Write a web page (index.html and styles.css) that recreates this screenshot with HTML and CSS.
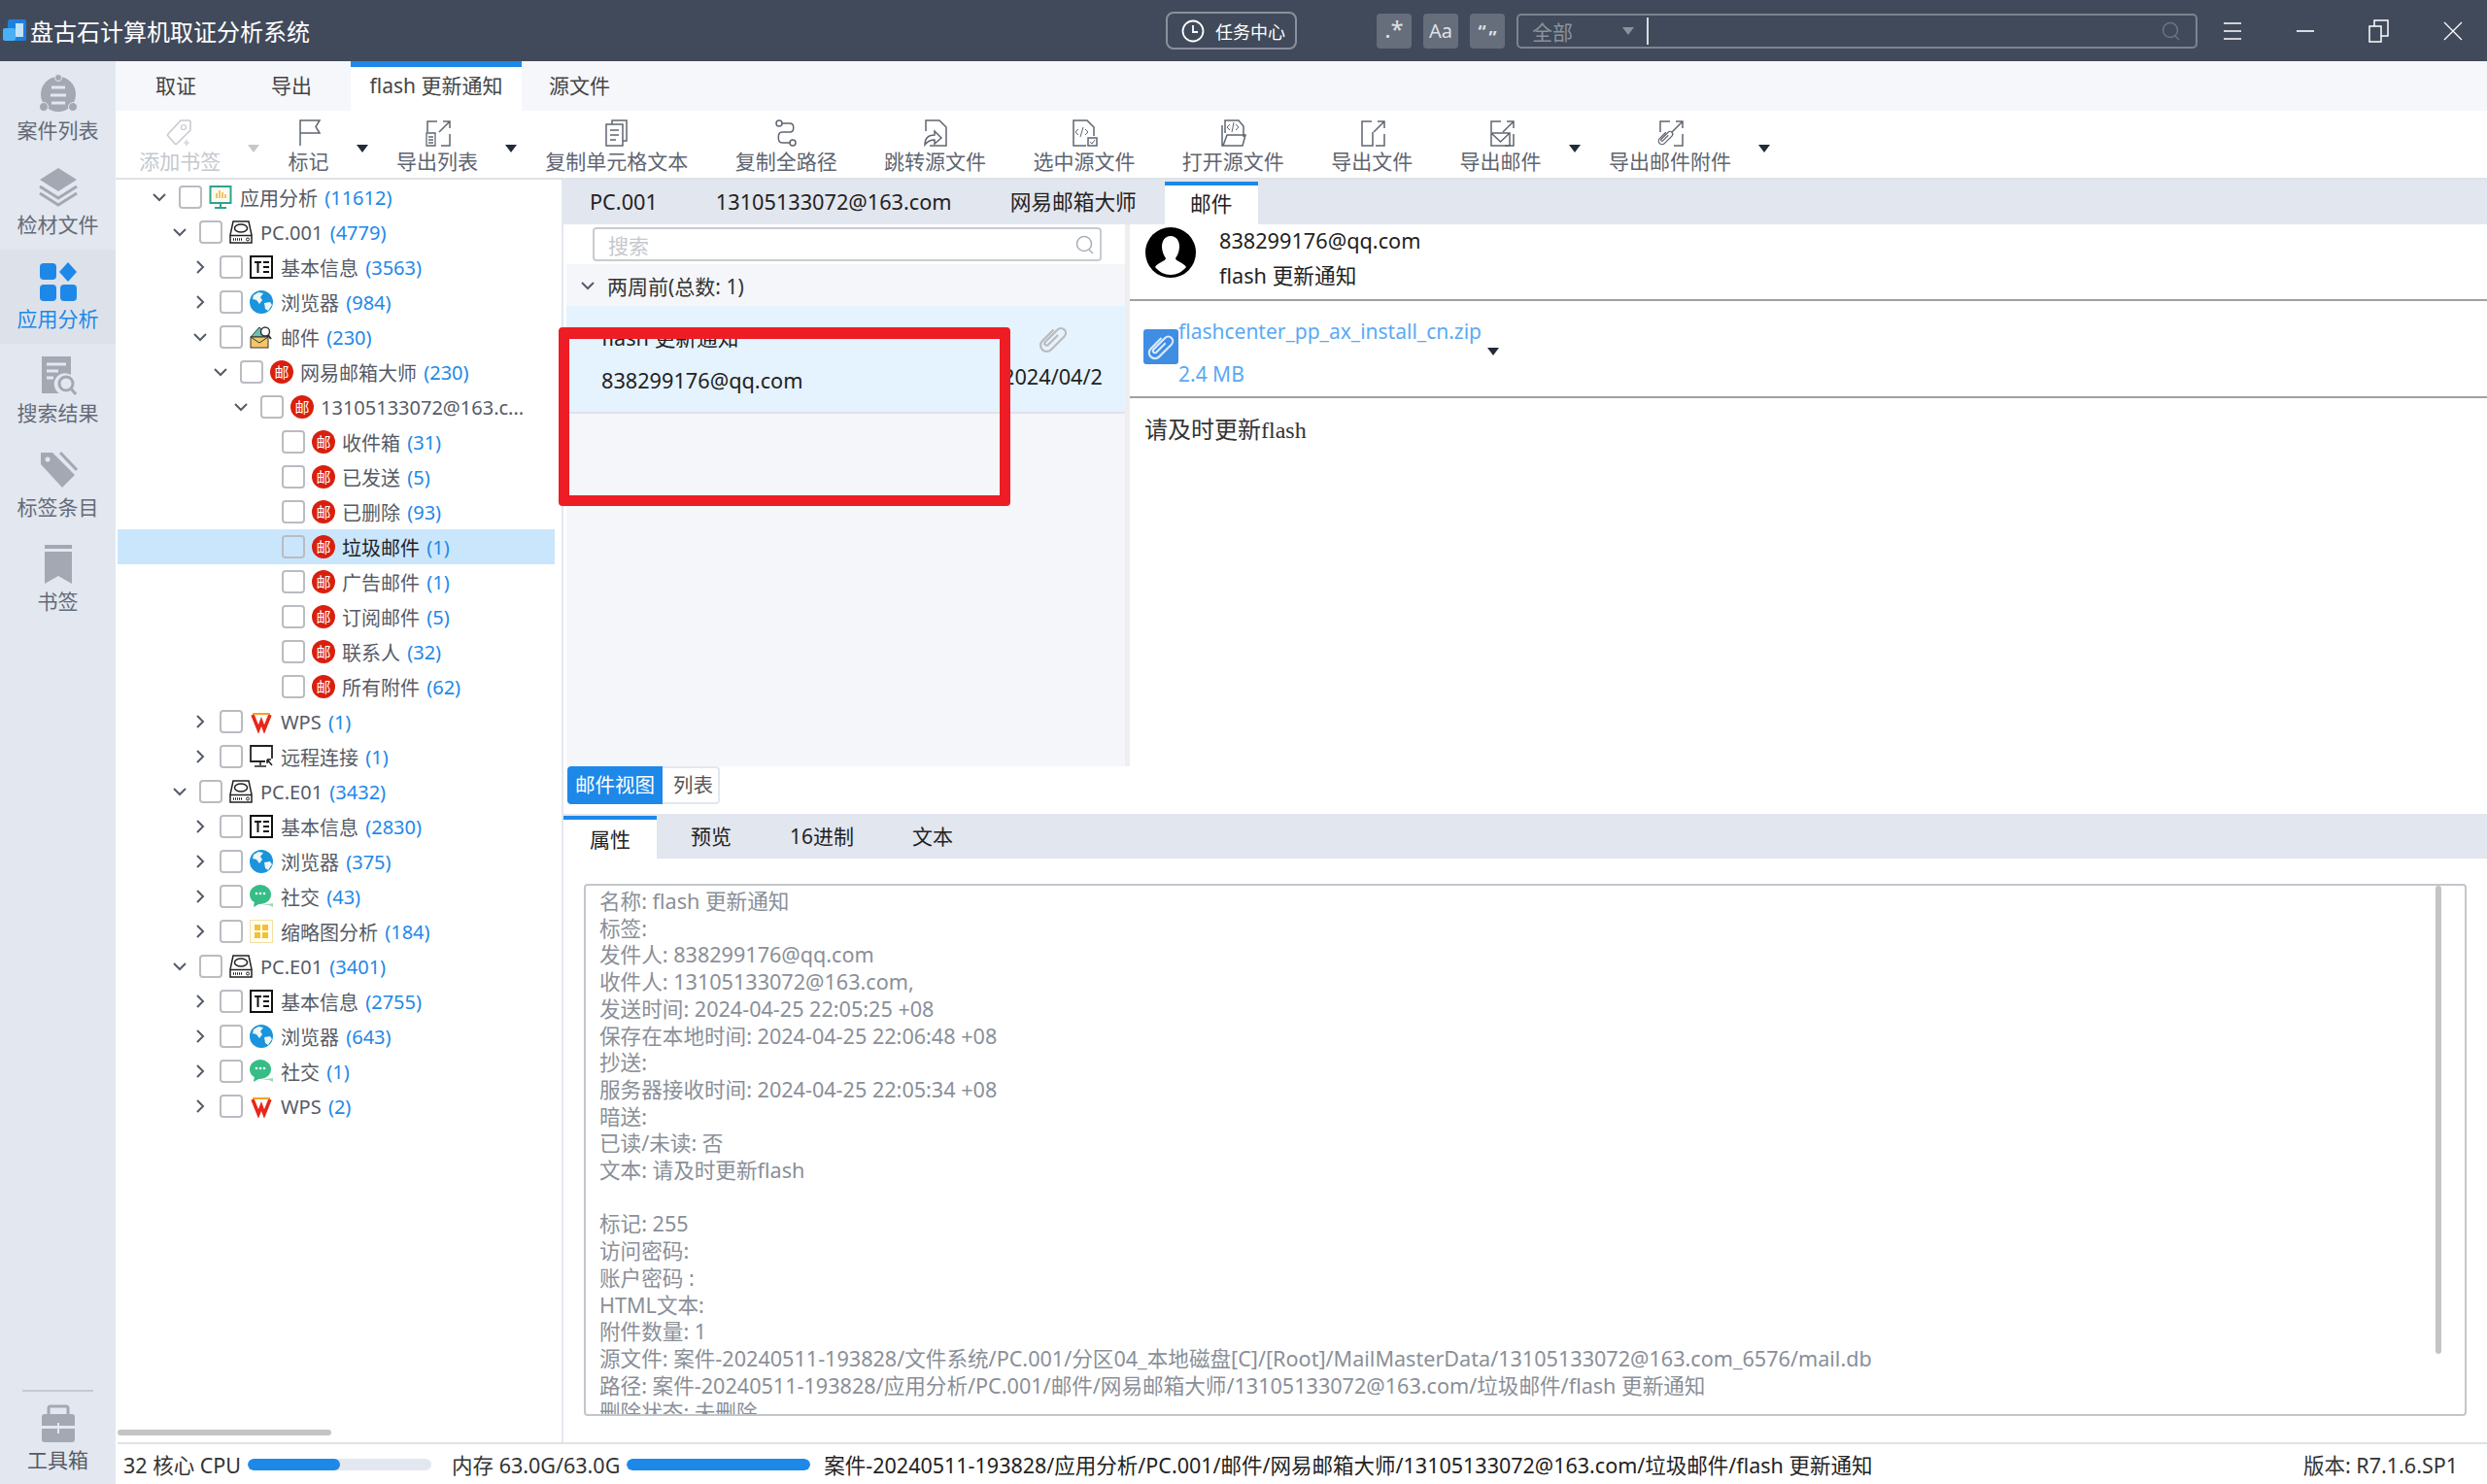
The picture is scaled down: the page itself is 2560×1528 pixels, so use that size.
FILE: index.html
```html
<!DOCTYPE html>
<html lang="zh-CN">
<head>
  <meta charset="UTF-8" />
  <title>盘古石计算机取证分析系统</title>
  <link rel="stylesheet" href="styles.css">
</head>
<body>
  <svg class="sprite" width="0" height="0">
    <symbol id="i-chev-d" viewBox="0 0 16 16"><path d="M2 5l6 6 6-6" fill="none" stroke="#555c68" stroke-width="2"/></symbol>
    <symbol id="i-chev-r" viewBox="0 0 16 16"><path d="M5 2l6 6-6 6" fill="none" stroke="#555c68" stroke-width="2"/></symbol>
    <symbol id="i-app" viewBox="0 0 24 24"><rect x="1.500" y="1" width="21" height="17" fill="#fdfaf0" stroke="#2aa58e" stroke-width="2"/><path d="M8 13V8M11 13V5M14 13V7M17 13V9" stroke="#e9b23c" stroke-width="1.5"/><path d="M12 18v4M6 23h12" stroke="#2aa58e" stroke-width="2"/></symbol>
    <symbol id="i-disk" viewBox="0 0 24 24"><path d="M4 1h16l3 14v8H1v-8z" fill="#fff" stroke="#222" stroke-width="1.5"/><ellipse cx="12" cy="8" rx="6.500" ry="4" fill="#fff" stroke="#222" stroke-width="1.5"/><path d="M1 15.500h22" stroke="#222" stroke-width="1.5"/><path d="M4 19.500h10" stroke="#222" stroke-width="2.500" stroke-dasharray="1 1"/><circle cx="19" cy="19.500" r="1.500" fill="none" stroke="#222"/></symbol>
    <symbol id="i-info" viewBox="0 0 24 24"><rect x="1" y="1" width="22" height="22" fill="#fff" stroke="#111" stroke-width="2"/><path d="M5 7h7M8.500 7v11M14 7h6M14 12h6M14 17h6" stroke="#111" stroke-width="2"/></symbol>
    <symbol id="i-globe" viewBox="0 0 24 24"><circle cx="12" cy="12" r="12" fill="#1a94dc"/><path d="M4 5l5-3 5 1-3 4 2 3-3 4-3-4-4-1zM15 13l6-1 2 3-4 6-3-2z" fill="#eef6f2"/></symbol>
    <symbol id="i-mailbox" viewBox="0 0 24 24"><path d="M1 12L10 2l9 10z" fill="#6cc0b4" stroke="#333"/><rect x="1" y="12" width="18" height="11" fill="#f4c766" stroke="#333"/><path d="M1 12l9 6 9-6" fill="none" stroke="#333"/><circle cx="16" cy="6.500" r="4.500" fill="#fff" stroke="#333" stroke-width="1.500"/><path d="M19 10l3 4" stroke="#333" stroke-width="2"/></symbol>
    <symbol id="i-wps" viewBox="0 0 24 24"><path d="M3 5l6 15 3-8 3 8 6-15" fill="none" stroke="#e8261a" stroke-width="3.500"/><path d="M3 4h18" stroke="#f9a01b" stroke-width="2"/></symbol>
    <symbol id="i-remote" viewBox="0 0 24 24"><path d="M16 17H1V1h22v13" fill="none" stroke="#222" stroke-width="1.800"/><path d="M11 17v4M5 22h12M18 15l5 6M18 15v4M18 15h4" fill="none" stroke="#222" stroke-width="1.500"/></symbol>
    <symbol id="i-chat" viewBox="0 0 24 24"><path d="M24 19c0 2 0 4 0 4l-4-2h-8z" fill="#9bd8b8"/><ellipse cx="11" cy="10" rx="11" ry="10" fill="#35bd85"/><path d="M5 17l-1 6 7-4z" fill="#35bd85"/><circle cx="7" cy="9" r="1.300" fill="#fff"/><circle cx="11" cy="9" r="1.300" fill="#fff"/><circle cx="15" cy="9" r="1.300" fill="#fff"/></symbol>
    <symbol id="i-thumb" viewBox="0 0 24 24"><rect x=".5" y=".5" width="23" height="23" fill="#fffdf4" stroke="#f5dfa0"/><path d="M5 5h6v6H5zM13 5h6v6h-6zM5 13h6v6H5zM13 13h6v6h-6z" fill="#f2c230"/></symbol>
    <symbol id="i-clip" viewBox="0 0 24 24"><path transform="rotate(45 12 12)" d="M12.500 7.500v10a1.500 1.500 0 0 1-3 0V5a3.500 3.500 0 0 1 7 0v13.500a4.500 4.500 0 0 1-9 0V7" fill="none" stroke="currentColor" stroke-width="1.600"/></symbol>
    <symbol id="i-export" viewBox="0 0 28 28"><path d="M4 13V2h10M18 27h9V15M27 2L16 13M20 2h7v7" fill="none" stroke="currentColor" stroke-width="1.500"/></symbol>
  </svg>

  <header class="titlebar">
    <svg class="app-logo" width="24" height="24" viewBox="0 0 24 24"><rect x="5" y="0" width="19" height="22" rx="2" fill="#1e7fdc"/><rect x="0" y="9" width="13" height="13" rx="2" fill="#49b0f5"/><rect x="13" y="4" width="8" height="14" fill="#bfe2fb"/></svg>
    <div class="app-title">盘古石计算机取证分析系统</div>
    <button class="task-btn">
      <svg width="24" height="24" viewBox="0 0 24 24"><circle cx="12" cy="12" r="10.500" fill="none" stroke="#fff" stroke-width="1.800"/><path d="M12 6v7h5" fill="none" stroke="#fff" stroke-width="1.800"/></svg>
      任务中心
    </button>
    <div class="opt-btn opt-regex">.*</div>
    <div class="opt-btn">Aa</div>
    <div class="opt-btn opt-quote">“<span>”</span></div>
    <div class="searchbar">
      <span class="scope">全部</span>
      <span class="scope-caret"></span>
      <span class="scope-sep"></span>
      <svg class="searchbar-ic" width="22" height="22" viewBox="0 0 22 22"><circle cx="10" cy="10" r="7.500" fill="none" stroke="#6d7481" stroke-width="1.500"/><path d="M15 16l4 4" stroke="#6d7481" stroke-width="1.500"/></svg>
    </div>
    <div class="win-btns">
      <svg width="20" height="20" viewBox="0 0 20 20"><path d="M1 2h18M1 10h18M1 18h18" stroke="#fff" stroke-width="1.500"/></svg>
      <svg width="20" height="20" viewBox="0 0 20 20"><path d="M1 10h18" stroke="#d8dbe0" stroke-width="2"/></svg>
      <svg width="22" height="24" viewBox="0 0 22 24"><rect x="1" y="7" width="12" height="16" fill="#414a5b" stroke="#fff" stroke-width="1.500"/><path d="M6 7V1h14v16h-7" fill="none" stroke="#fff" stroke-width="1.500"/></svg>
      <svg width="20" height="20" viewBox="0 0 20 20"><path d="M1 1l18 18M19 1L1 19" stroke="#fff" stroke-width="1.200"/></svg>
    </div>
  </header>

  <div class="app">
    <nav class="sidebar">
      <div class="side-item">
        <svg width="40" height="40" viewBox="0 0 40 40"><circle cx="20" cy="21" r="18" fill="#a3a8b3"/><circle cx="20" cy="4" r="3.500" fill="#a3a8b3" stroke="#e3e7ef"/><circle cx="5" cy="34" r="4.500" fill="#a3a8b3" stroke="#e3e7ef"/><circle cx="35" cy="34" r="4.500" fill="#a3a8b3" stroke="#e3e7ef"/><path d="M13 14h14M12 22h16M13 30h14" stroke="#e3e7ef" stroke-width="3"/></svg>
        <span>案件列表</span>
      </div>
      <div class="side-item">
        <svg width="40" height="40" viewBox="0 0 40 40"><path d="M20 0l19 12-19 12L1 12z" fill="#a3a8b3"/><path d="M1 19l19 12 19-12M1 26l19 12 19-12" fill="none" stroke="#a3a8b3" stroke-width="3"/></svg>
        <span>检材文件</span>
      </div>
      <div class="side-item active">
        <svg width="40" height="40" viewBox="0 0 40 40"><rect x="1" y="1" width="17" height="17" rx="4" fill="#1e88e8"/><path d="M30 0l9 10-9 10-9-10z" fill="#1e88e8"/><rect x="1" y="23" width="17" height="17" rx="4" fill="#1e88e8"/><rect x="22" y="23" width="17" height="17" rx="4" fill="#1e88e8"/></svg>
        <span>应用分析</span>
      </div>
      <div class="side-item">
        <svg width="40" height="40" viewBox="0 0 40 40"><path d="M3 0h30v19a11 11 0 0 0-12 19H3z" fill="#a3a8b3"/><path d="M8 8h20M8 15h12M8 22h7" stroke="#e3e7ef" stroke-width="3"/><circle cx="28" cy="28" r="7" fill="none" stroke="#a3a8b3" stroke-width="3"/><path d="M33 33l5 6" stroke="#a3a8b3" stroke-width="3"/></svg>
        <span>搜索结果</span>
      </div>
      <div class="side-item">
        <svg width="40" height="40" viewBox="0 0 40 40"><path d="M2 2h12l23 23-13 13L2 14z" fill="#a3a8b3"/><path d="M22 2l17 18" stroke="#a3a8b3" stroke-width="3"/><circle cx="9" cy="9" r="2.500" fill="#e3e7ef"/></svg>
        <span>标签条目</span>
      </div>
      <div class="side-item">
        <svg width="40" height="40" viewBox="0 0 40 40"><path d="M6 0h28v4H6zM6 7h28v33l-14-8-14 8z" fill="#a3a8b3"/></svg>
        <span>书签</span>
      </div>
      <div class="side-tools">
        <svg width="40" height="40" viewBox="0 0 40 40"><path d="M10 10V4q0-2 2-2h16q2 0 2 2v6" fill="none" stroke="#a3a8b3" stroke-width="3"/><path d="M3 13q0-3 3-3h28q3 0 3 3v9H3zM3 25h34v11q0 3-3 3H6q-3 0-3-3z" fill="#a3a8b3"/><path d="M20 19v11" stroke="#e3e7ef" stroke-width="2"/></svg>
        <span>工具箱</span>
      </div>
    </nav>

    <div class="main">
      <div class="ribbon-tabs">
        <div class="rtab">取证</div>
        <div class="rtab">导出</div>
        <div class="rtab active">flash 更新通知</div>
        <div class="rtab">源文件</div>
      </div>

      <div class="toolbar">
        <div class="tool disabled">
          <svg width="28" height="28" viewBox="0 0 28 28"><path d="M15 1h9q1 0 1 1v9L11 25q-1 1-2 0L2 17q-1-1 0-2z" fill="none" stroke="currentColor" stroke-width="1.500"/><circle cx="18" cy="8" r="2.500" fill="none" stroke="currentColor" stroke-width="1.200"/><path d="M21 21v6M18 24h6" stroke="currentColor" stroke-width="1.200"/></svg>
          <span>添加书签</span>
        </div>
        <div class="caret disabled"></div>
        <div class="tool">
          <svg width="28" height="28" viewBox="0 0 28 28"><path d="M5 27V1h20l-4 6.500 4 6.500H5" fill="none" stroke="currentColor" stroke-width="1.500"/></svg>
          <span>标记</span>
        </div>
        <div class="caret"></div>
        <div class="tool">
          <svg width="28" height="28" viewBox="0 0 28 28"><use href="#i-export"/><path d="M3 14h9v13H3zM5 18h5M5 21h5M5 24h5" fill="none" stroke="currentColor" stroke-width="1.300"/></svg>
          <span>导出列表</span>
        </div>
        <div class="caret"></div>
        <div class="tool">
          <svg width="28" height="28" viewBox="0 0 28 28"><path d="M9 5V1h15v21h-4" fill="none" stroke="currentColor" stroke-width="1.500"/><path d="M3 5h17v22H3zM7 11h9M7 16h9M7 21h6" fill="none" stroke="currentColor" stroke-width="1.500"/></svg>
          <span>复制单元格文本</span>
        </div>
        <div class="tool">
          <svg width="28" height="28" viewBox="0 0 28 28"><circle cx="7" cy="4" r="3" fill="none" stroke="currentColor" stroke-width="1.500"/><circle cx="21" cy="24" r="3" fill="none" stroke="currentColor" stroke-width="1.500"/><path d="M10 4h8c5 0 5 9 0 9h-8c-5 0-5 11 0 11h8" fill="none" stroke="currentColor" stroke-width="1.500"/></svg>
          <span>复制全路径</span>
        </div>
        <div class="tool">
          <svg width="28" height="28" viewBox="0 0 28 28"><path d="M4 12V1h14l7 7v19H8" fill="none" stroke="currentColor" stroke-width="1.500"/><path d="M3 26c0-7 4-10 10-10v-4l7 7-7 6v-4c-4 0-7 1-10 5z" fill="none" stroke="currentColor" stroke-width="1.500"/></svg>
          <span>跳转源文件</span>
        </div>
        <div class="tool">
          <svg width="28" height="28" viewBox="0 0 28 28"><path d="M16 27H3V1h14l7 7v9" fill="none" stroke="currentColor" stroke-width="1.500"/><path d="M8 10l-3 3 3 3M15 10l3 3-3 3M13 8l-3 10" fill="none" stroke="currentColor"/><rect x="18" y="19" width="9" height="8" fill="none" stroke="currentColor" stroke-width="1.500"/><path d="M20 23l2 2 3-4" fill="none" stroke="currentColor"/></svg>
          <span>选中源文件</span>
        </div>
        <div class="tool">
          <svg width="28" height="28" viewBox="0 0 28 28"><path d="M6 14V1h14l5 6v11" fill="none" stroke="currentColor" stroke-width="1.500"/><path d="M3 6v21h21l3-11H8l-4 11" fill="none" stroke="currentColor" stroke-width="1.500"/><path d="M11 5l-3 3 3 3M17 5l3 3-3 3M15 3l-2 10" fill="none" stroke="currentColor"/></svg>
          <span>打开源文件</span>
        </div>
        <div class="tool">
          <svg width="28" height="28" viewBox="0 0 28 28"><use href="#i-export"/><path d="M4 13v14h11V13" fill="none" stroke="currentColor" stroke-width="1.500"/></svg>
          <span>导出文件</span>
        </div>
        <div class="tool">
          <svg width="28" height="28" viewBox="0 0 28 28"><use href="#i-export"/><path d="M4 14h19v13H4zM4 14l9.500 9 9.500-9" fill="none" stroke="currentColor" stroke-width="1.500"/></svg>
          <span>导出邮件</span>
        </div>
        <div class="caret"></div>
        <div class="tool">
          <svg width="28" height="28" viewBox="0 0 28 28"><use href="#i-export"/><use href="#i-clip" x="0" y="9" width="19" height="19"/></svg>
          <span>导出邮件附件</span>
        </div>
        <div class="caret"></div>
      </div>

      <div class="work">
        <div class="tree">
          <div class="row l0"><svg class="chev"><use href="#i-chev-d"/></svg><i class="cb"></i><svg class="ti"><use href="#i-app"/></svg>应用分析 <b>(11612)</b></div>
          <div class="row l1"><svg class="chev"><use href="#i-chev-d"/></svg><i class="cb"></i><svg class="ti"><use href="#i-disk"/></svg>PC.001 <b>(4779)</b></div>
          <div class="row l2"><svg class="chev"><use href="#i-chev-r"/></svg><i class="cb"></i><svg class="ti"><use href="#i-info"/></svg>基本信息 <b>(3563)</b></div>
          <div class="row l2"><svg class="chev"><use href="#i-chev-r"/></svg><i class="cb"></i><svg class="ti"><use href="#i-globe"/></svg>浏览器 <b>(984)</b></div>
          <div class="row l2"><svg class="chev"><use href="#i-chev-d"/></svg><i class="cb"></i><svg class="ti"><use href="#i-mailbox"/></svg>邮件 <b>(230)</b></div>
          <div class="row l3"><svg class="chev"><use href="#i-chev-d"/></svg><i class="cb"></i><span class="mm">邮</span>网易邮箱大师 <b>(230)</b></div>
          <div class="row l4"><svg class="chev"><use href="#i-chev-d"/></svg><i class="cb"></i><span class="mm">邮</span>13105133072@163.c...</div>
          <div class="row l5"><i class="cb"></i><span class="mm">邮</span>收件箱 <b>(31)</b></div>
          <div class="row l5"><i class="cb"></i><span class="mm">邮</span>已发送 <b>(5)</b></div>
          <div class="row l5"><i class="cb"></i><span class="mm">邮</span>已删除 <b>(93)</b></div>
          <div class="row l5 selected"><i class="cb"></i><span class="mm">邮</span>垃圾邮件 <b>(1)</b></div>
          <div class="row l5"><i class="cb"></i><span class="mm">邮</span>广告邮件 <b>(1)</b></div>
          <div class="row l5"><i class="cb"></i><span class="mm">邮</span>订阅邮件 <b>(5)</b></div>
          <div class="row l5"><i class="cb"></i><span class="mm">邮</span>联系人 <b>(32)</b></div>
          <div class="row l5"><i class="cb"></i><span class="mm">邮</span>所有附件 <b>(62)</b></div>
          <div class="row l2"><svg class="chev"><use href="#i-chev-r"/></svg><i class="cb"></i><svg class="ti"><use href="#i-wps"/></svg>WPS <b>(1)</b></div>
          <div class="row l2"><svg class="chev"><use href="#i-chev-r"/></svg><i class="cb"></i><svg class="ti"><use href="#i-remote"/></svg>远程连接 <b>(1)</b></div>
          <div class="row l1"><svg class="chev"><use href="#i-chev-d"/></svg><i class="cb"></i><svg class="ti"><use href="#i-disk"/></svg>PC.E01 <b>(3432)</b></div>
          <div class="row l2"><svg class="chev"><use href="#i-chev-r"/></svg><i class="cb"></i><svg class="ti"><use href="#i-info"/></svg>基本信息 <b>(2830)</b></div>
          <div class="row l2"><svg class="chev"><use href="#i-chev-r"/></svg><i class="cb"></i><svg class="ti"><use href="#i-globe"/></svg>浏览器 <b>(375)</b></div>
          <div class="row l2"><svg class="chev"><use href="#i-chev-r"/></svg><i class="cb"></i><svg class="ti"><use href="#i-chat"/></svg>社交 <b>(43)</b></div>
          <div class="row l2"><svg class="chev"><use href="#i-chev-r"/></svg><i class="cb"></i><svg class="ti"><use href="#i-thumb"/></svg>缩略图分析 <b>(184)</b></div>
          <div class="row l1"><svg class="chev"><use href="#i-chev-d"/></svg><i class="cb"></i><svg class="ti"><use href="#i-disk"/></svg>PC.E01 <b>(3401)</b></div>
          <div class="row l2"><svg class="chev"><use href="#i-chev-r"/></svg><i class="cb"></i><svg class="ti"><use href="#i-info"/></svg>基本信息 <b>(2755)</b></div>
          <div class="row l2"><svg class="chev"><use href="#i-chev-r"/></svg><i class="cb"></i><svg class="ti"><use href="#i-globe"/></svg>浏览器 <b>(643)</b></div>
          <div class="row l2"><svg class="chev"><use href="#i-chev-r"/></svg><i class="cb"></i><svg class="ti"><use href="#i-chat"/></svg>社交 <b>(1)</b></div>
          <div class="row l2"><svg class="chev"><use href="#i-chev-r"/></svg><i class="cb"></i><svg class="ti"><use href="#i-wps"/></svg>WPS <b>(2)</b></div>
          <div class="tree-scroll"></div>
        </div>

        <div class="content">
          <div class="crumbs">
            <div class="crumb">PC.001</div>
            <div class="crumb">13105133072@163.com</div>
            <div class="crumb">网易邮箱大师</div>
            <div class="crumb active">邮件</div>
          </div>

          <div class="upper">
            <div class="mail-list">
              <div class="list-search">
                <span>搜索</span>
                <svg width="22" height="22" viewBox="0 0 22 22"><circle cx="10" cy="10" r="7.500" fill="none" stroke="#aab0b8" stroke-width="1.500"/><path d="M15 16l4 4" stroke="#aab0b8" stroke-width="1.500"/></svg>
              </div>
              <div class="list-group"><svg class="group-chev"><use href="#i-chev-d"/></svg>两周前(总数: 1)</div>
              <div class="list-item">
                <div class="item-left">
                  <div class="item-subject">flash 更新通知</div>
                  <div>838299176@qq.com</div>
                </div>
                <div class="item-right">
                  <svg class="item-clip" width="34" height="34"><use href="#i-clip"/></svg>
                  <div class="item-date">2024/04/2</div>
                </div>
              </div>
            </div>

            <div class="detail">
              <div class="detail-head">
                <svg width="52" height="52" viewBox="0 0 52 52"><circle cx="26" cy="26" r="26" fill="#000"/><path d="M26 9c6 0 9 5 9 11 0 5-2 9-4 12 0 3 8 4 11 9-4 5-10 8-16 8s-12-3-16-8c3-5 11-6 11-9-2-3-4-7-4-12 0-6 3-11 9-11z" fill="#fff"/></svg>
                <div>
                  <div>838299176@qq.com</div>
                  <div class="head-subject">flash 更新通知</div>
                </div>
              </div>
              <div class="attach">
                <svg class="attach-ic" width="36" height="36" viewBox="0 0 36 36"><rect width="36" height="36" rx="3" fill="#3f8ee4"/><use href="#i-clip" x="2" y="2" width="32" height="32" color="#dbe9fa"/></svg>
                <div class="attach-info">
                  <div class="attach-name">flashcenter_pp_ax_install_cn.zip<i class="caret-ic"></i></div>
                  <div class="attach-size">2.4 MB</div>
                </div>
              </div>
              <div class="mail-body">请及时更新flash</div>
            </div>
          </div>

          <div class="view-switch">
            <div class="vs active">邮件视图</div>
            <div class="vs">列表</div>
          </div>

          <div class="btabs">
            <div class="btab active">属性</div>
            <div class="btab">预览</div>
            <div class="btab">16进制</div>
            <div class="btab">文本</div>
          </div>

          <div class="props-wrap">
            <div class="props">
              <div class="props-text">名称: flash 更新通知
标签:
发件人: 838299176@qq.com
收件人: 13105133072@163.com,
发送时间: 2024-04-25 22:05:25 +08
保存在本地时间: 2024-04-25 22:06:48 +08
抄送:
服务器接收时间: 2024-04-25 22:05:34 +08
暗送:
已读/未读: 否
文本: 请及时更新flash

标记: 255
访问密码:
账户密码 :
HTML文本:
附件数量: 1
源文件: 案件-20240511-193828/文件系统/PC.001/分区04_本地磁盘[C]/[Root]/MailMasterData/13105133072@163.com_6576/mail.db
路径: 案件-20240511-193828/应用分析/PC.001/邮件/网易邮箱大师/13105133072@163.com/垃圾邮件/flash 更新通知
删除状态: 未删除</div>
              <div class="props-scroll"></div>
            </div>
          </div>
        </div>
      </div>

      <footer class="statusbar">
        <span>32 核心 CPU</span>
        <div class="meter"><div class="meter-fill cpu"></div></div>
        <span class="mem-label">内存 63.0G/63.0G</span>
        <div class="meter"><div class="meter-fill"></div></div>
        <span class="path">案件-20240511-193828/应用分析/PC.001/邮件/网易邮箱大师/13105133072@163.com/垃圾邮件/flash 更新通知</span>
        <span class="version">版本: R7.1.6.SP1</span>
      </footer>
    </div>
  </div>

  <div class="red-mark"></div>
</body>
</html>
```

FILE: styles.css
```css
:root {
  --blue: #1e88e8;
  --panel: #e3e7ef;
  --text: #555b66;
  --dark: #222;
}
* { box-sizing: border-box; }
html, body {
  margin: 0;
  width: 2560px;
  height: 1528px;
  overflow: hidden;
}
body {
  position: relative;
  font-family: "Noto Sans", "Noto Sans CJK SC", sans-serif;
  font-size: 20px;
  color: var(--dark);
  background: #fff;
}
.sprite { position: absolute; }

/* title bar */
.titlebar {
  height: 63px;
  background: #414a5b;
  display: flex;
  align-items: center;
  color: #fff;
}
.app-logo { margin: 0 4px 0 3px; flex: none; }
.app-title { font-size: 24px; width: 1169px; white-space: nowrap; }
.task-btn {
  width: 135px;
  height: 39px;
  border: 2px solid #8a919c;
  border-radius: 8px;
  background: none;
  color: #fff;
  font: inherit;
  font-size: 18px;
  display: flex;
  align-items: center;
  gap: 11px;
  padding: 0 0 0 14px;
  margin-right: 82px;
}
.opt-btn {
  width: 36px;
  height: 36px;
  margin-right: 12px;
  border-radius: 4px;
  background: #666d7b;
  color: #dfe1e5;
  font-size: 20px;
  text-align: center;
  line-height: 36px;
}
.opt-regex { font-size: 24px; line-height: 32px; }
.opt-quote { font-weight: 700; font-size: 18px; }
.opt-quote span { vertical-align: -6px; margin-left: 3px; }
.searchbar {
  width: 701px;
  height: 36px;
  border: 2px solid #7d838e;
  border-radius: 5px;
  display: flex;
  align-items: center;
  padding-left: 14px;
}
.scope { color: #8b929c; font-size: 21px; width: 93px; }
.scope-caret {
  width: 0;
  height: 0;
  border: 6px solid transparent;
  border-top: 8px solid #8b929c;
  border-bottom: 0;
}
.scope-sep { width: 2px; height: 28px; background: #d8dbe0; margin-left: 13px; }
.searchbar-ic { margin-left: auto; margin-right: 14px; }
.win-btns {
  display: flex;
  align-items: center;
  gap: 55px;
  margin-left: 26px;
}

/* app shell */
.app { display: flex; height: 1465px; }
.sidebar {
  width: 119px;
  flex: none;
  background: var(--panel);
  display: flex;
  flex-direction: column;
}
.side-item {
  height: 97px;
  padding-top: 13px;
  display: flex;
  flex-direction: column;
  align-items: center;
  gap: 4px;
  color: #636b78;
  font-size: 21px;
  line-height: 28px;
}
.side-item.active { background: #dde2ea; color: var(--blue); }
.side-tools {
  margin: auto 23px 0;
  border-top: 2px solid #c5c9d0;
  padding-top: 13px;
  height: 97px;
  display: flex;
  flex-direction: column;
  align-items: center;
  gap: 3px;
  color: #555b66;
  font-size: 21px;
  line-height: 28px;
  white-space: nowrap;
}
.main { flex: 1; min-width: 0; display: flex; flex-direction: column; }

/* ribbon */
.ribbon-tabs {
  height: 51px;
  background: #f5f7fb;
  display: flex;
  flex: none;
}
.rtab {
  padding: 0 40px;
  line-height: 51px;
  color: #444;
  font-size: 21px;
  white-space: nowrap;
}
.rtab:first-child { padding-left: 41px; padding-right: 37px; }
.rtab.active {
  background: #fff;
  border-top: 6px solid var(--blue);
  line-height: 39px;
  padding: 0;
  width: 176px;
  text-align: center;
}
.rtab:last-child { padding-left: 28px; }
.toolbar {
  height: 71px;
  flex: none;
  display: flex;
  border-bottom: 2px solid #dfe2e7;
  padding-top: 9px;
}
.tool {
  padding: 0 24.2px;
  display: flex;
  flex-direction: column;
  align-items: center;
  color: #5f6570;
  font-size: 21px;
  line-height: 28px;
  white-space: nowrap;
}
.tool svg { flex: none; margin-bottom: 1px; }
.tool.disabled { color: #c5c8cd; }
.caret {
  width: 21px;
  flex: none;
  position: relative;
}
.caret::after {
  content: "";
  position: absolute;
  left: 4px;
  top: 26px;
  border: 6px solid transparent;
  border-top: 8px solid #222b3a;
  border-bottom: 0;
}
.caret.disabled::after { border-top-color: #c5c8cd; }

/* workspace */
.work { flex: 1; display: flex; min-height: 0; }
.tree {
  width: 461px;
  flex: none;
  position: relative;
  border-right: 2px solid var(--panel);
  padding-left: 2px;
}
.row {
  height: 36px;
  display: flex;
  align-items: center;
  width: 450px;
  color: var(--text);
  white-space: pre;
}
.row b { font-weight: 400; color: var(--blue); margin-left: 2px; }
.row.selected { background: #cae6fd; color: var(--dark); }
.l0 { padding-left: 33px; }
.l1 { padding-left: 54px; }
.l2 { padding-left: 75px; }
.l3 { padding-left: 96px; }
.l4 { padding-left: 117px; }
.l5 { padding-left: 169px; }
.chev { width: 20px; height: 16px; margin-right: 10px; flex: none; }
.cb {
  width: 24px;
  height: 24px;
  flex: none;
  border: 2px solid #b9bcc1;
  border-radius: 4px;
  background: #fff;
  margin-right: 7px;
}
.selected .cb { background: #cae6fd; }
.ti { width: 24px; height: 24px; margin-right: 8px; flex: none; }
.mm {
  width: 24px;
  height: 24px;
  margin-right: 7px;
  flex: none;
  border-radius: 50%;
  background: #d9200f;
  color: #fff;
  font-size: 15px;
  line-height: 24px;
  text-align: center;
}
.tree-scroll {
  position: absolute;
  left: 2px;
  bottom: 7px;
  width: 220px;
  height: 6px;
  border-radius: 3px;
  background: #c4c4c4;
}
.content { flex: 1; min-width: 0; display: flex; flex-direction: column; }
.crumbs {
  height: 46px;
  flex: none;
  background: #e2e6ee;
  display: flex;
  padding-left: 27px;
  color: #222;
  font-size: 21.7px;
}
.crumb { line-height: 46px; margin-right: 60px; white-space: nowrap; }
.crumb:nth-child(3) { margin-right: 29px; }
.crumb.active {
  background: #fff;
  width: 96px;
  margin: 2px 0 0;
  border-top: 4px solid var(--blue);
  text-align: center;
  line-height: 38px;
}
.upper { height: 558px; flex: none; display: flex; }
.mail-list {
  width: 580px;
  flex: none;
  margin-left: 3px;
  padding-top: 3px;
  background: linear-gradient(#fff 41px, #f4f6fa 41px);
  border-right: 5px solid #eee;
}
.list-search {
  margin-left: 27px;
  width: 524px;
  height: 35px;
  border: 2px solid #c8cbd0;
  border-radius: 4px;
  display: flex;
  align-items: center;
  justify-content: space-between;
  padding: 0 4px 0 14px;
  color: #c5c8cd;
  font-size: 21px;
  background: #fff;
}
.list-group {
  height: 43px;
  margin-top: 3px;
  display: flex;
  align-items: center;
  color: #333;
  font-size: 21px;
  padding-left: 14px;
}
.group-chev { width: 16px; height: 16px; margin-right: 12px; }
.list-item {
  height: 111px;
  background: #e5f3fe;
  border-bottom: 2px solid #dfe3ea;
  display: flex;
  justify-content: space-between;
  font-size: 21.7px;
  color: #222;
  padding: 0 23px 0 36px;
}
.item-subject { margin: 19px 0 16px; }
.item-left { line-height: 28px; }
.item-right { position: relative; width: 100px; }
.item-clip { position: absolute; left: 32px; top: 17px; color: #bbb; }
.item-date { position: absolute; right: 0; top: 58px; white-space: nowrap; }
.detail { flex: 1; min-width: 0; }
.detail-head {
  height: 79px;
  border-bottom: 2px solid #a0a0a0;
  display: flex;
  gap: 24px;
  padding: 3px 0 0 16px;
  font-size: 21.7px;
  line-height: 28px;
  color: #222;
}
.head-subject { margin-top: 8px; }
.attach {
  height: 100px;
  border-bottom: 2px solid #a0a0a0;
  display: flex;
  align-items: flex-start;
  padding-left: 14px;
}
.attach-ic { margin-top: 29px; flex: none; }
.attach-info { color: #5aa9f5; font-size: 21px; line-height: 28px; padding-top: 17px; }
.attach-name { position: relative; }
.caret-ic {
  position: absolute;
  left: 318px;
  top: 31px;
  border: 6px solid transparent;
  border-top: 8px solid #222b3a;
  border-bottom: 0;
}
.attach-size { margin-top: 16px; }
.mail-body {
  padding: 18px 0 0 15px;
  font-family: "Liberation Serif", "Noto Sans CJK SC", serif;
  font-size: 24px;
  line-height: 30px;
  color: #333;
}
.view-switch {
  height: 49px;
  flex: none;
  display: flex;
  align-items: flex-start;
  padding-left: 4px;
}
.vs {
  height: 39px;
  line-height: 35px;
  padding: 0 5px 0 11px;
  border: 2px solid var(--panel);
  border-left: 0;
  border-radius: 0 4px 4px 0;
  color: #555;
  font-size: 20.5px;
}
.vs.active {
  background: var(--blue);
  color: #fff;
  border: 0;
  line-height: 39px;
  padding: 0 8px;
  border-radius: 4px 0 0 4px;
}
.btabs {
  height: 46px;
  flex: none;
  background: #e2e6ee;
  display: flex;
  color: #222;
  font-size: 21px;
}
.btab { line-height: 46px; margin-right: 60px; }
.btab.active {
  background: #fff;
  width: 96px;
  margin-right: 35px;
  margin-top: 2px;
  border-top: 4px solid var(--blue);
  text-align: center;
  line-height: 40px;
}
.props-wrap { flex: 1; min-height: 0; padding: 26px 21px 27px 21px; }
.props {
  position: relative;
  height: 100%;
  border: 2px solid #c3c7cc;
  border-radius: 4px;
  overflow: hidden;
  padding: 2px 0 0 14px;
}
.props-text {
  white-space: pre;
  color: #8a8f98;
  font-size: 21.6px;
  line-height: 27.7px;
}
.props-scroll {
  position: absolute;
  right: 24px;
  top: 0;
  width: 6px;
  height: 482px;
  border-radius: 3px;
  background: #c4c4c4;
}

/* status bar */
.statusbar {
  height: 43px;
  flex: none;
  border-top: 2px solid #dde2e6;
  margin-left: 2px;
  display: flex;
  align-items: center;
  padding: 0 30px 0 6px;
  color: #333;
  font-size: 21.5px;
  white-space: nowrap;
}
.meter {
  width: 189px;
  height: 12px;
  border-radius: 6px;
  background: var(--panel);
  margin-left: 7px;
  overflow: hidden;
  flex: none;
}
.meter-fill { height: 100%; border-radius: 6px; background: var(--blue); }
.meter-fill.cpu { width: 50%; }
.mem-label { margin-left: 21px; }
.path { margin-left: 14px; color: #222; }
.version { margin-left: auto; }

/* red annotation drawn on top of the screenshot */
.red-mark {
  position: absolute;
  left: 575px;
  top: 337px;
  width: 465px;
  height: 184px;
  border: 11px solid #ee1c25;
  border-top-width: 12px;
  border-radius: 4px;
}
```
